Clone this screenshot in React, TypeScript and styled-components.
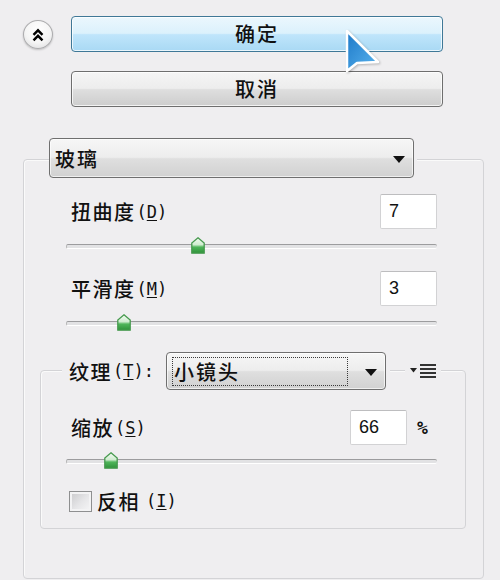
import React from "react";
import styled, { createGlobalStyle } from "styled-components";

const BG = "#efeef0";

const GlobalStyle = createGlobalStyle`
  html, body { margin: 0; padding: 0; background: ${BG}; }
  body { font-family: "Noto Sans CJK SC", "Noto Sans", sans-serif; color: #111; }
  * { box-sizing: border-box; }
`;

const Page = styled.div`
  position: relative;
  width: 500px;
  height: 580px;
  overflow: hidden;
  padding-top: 16px;
  background: ${BG};
`;

const TopBar = styled.div`
  display: grid;
  grid-template-columns: 71px 372px;
`;

const CollapseButton = styled.button`
  width: 30px;
  height: 29px;
  margin: 4px 0 0 23px;
  padding: 0;
  border-radius: 50%;
  border: 1px solid #acacae;
  background: radial-gradient(circle at 50% 35%, #ffffff 0%, #f5f5f5 55%, #d8d8da 100%);
  box-shadow: 0 1px 2px rgba(0, 0, 0, 0.2);
  display: flex;
  align-items: center;
  justify-content: center;
`;

const ButtonStack = styled.div`
  display: flex;
  flex-direction: column;
  gap: 19px;
`;

const PushButton = styled.button<{ $primary?: boolean }>`
  height: 36px;
  width: 100%;
  padding: 0;
  border-radius: 4px;
  border: 1px solid ${(p) => (p.$primary ? "#3f7897" : "#6e6e6e")};
  background: ${(p) =>
    p.$primary
      ? "linear-gradient(to bottom, #ebf7fd 0%, #dbf1fc 48%, #bfe5fb 52%, #a9d9f4 100%)"
      : "linear-gradient(to bottom, #f5f5f5 0%, #ededed 48%, #dedede 52%, #cdcdcd 100%)"};
  box-shadow: inset 0 0 0 1px rgba(255, 255, 255, 0.75);
  font-family: inherit;
  font-size: 20px;
  font-weight: 500;
  letter-spacing: 2px;
  line-height: 1;
  color: #111;
`;

const GroupBox = styled.div`
  border: 1px solid #d3d3d6;
  border-radius: 4px;
  box-shadow: inset 1px 1px 0 #fafafa;
`;

const OuterGroup = styled(GroupBox)`
  width: 461px;
  margin: 52px 0 0 23px;
  padding: 0 17px 49px 16px;
`;

const InnerGroup = styled(GroupBox)`
  margin-top: 40px;
  padding: 0 28px 16px 25px;
`;

const OuterHeader = styled.div`
  display: flex;
  margin: -22px 0 0 9px;
`;

const HeaderPad = styled.div`
  display: flex;
  background: ${BG};
  padding-right: 3px;
`;

const Select = styled.div<{ $width: number; $height: number }>`
  display: flex;
  align-items: center;
  width: ${(p) => p.$width}px;
  height: ${(p) => p.$height}px;
  padding: 0 8px 0 5px;
  border: 1px solid #6f6f6f;
  border-radius: 4px;
  background: linear-gradient(to bottom, #f6f6f6 0%, #ededed 48%, #dfdfdf 52%, #d1d1d1 100%);
  box-shadow: inset 0 0 0 1px rgba(255, 255, 255, 0.65);
  font-size: 20px;
  font-weight: 500;
  letter-spacing: 2px;
  white-space: nowrap;
`;

const FocusRect = styled.div`
  display: flex;
  align-items: center;
  width: 178px;
  height: 29px;
  margin-right: 17px;
  padding-left: 1px;
  border: 1px dotted #3a3a3a;
`;

const Arrow = styled.svg`
  flex: none;
  margin-left: auto;
  margin-top: 2px;
`;

const Params = styled.div`
  padding: 0 29px 0 26px;
`;

const ParamRow = styled.div<{ $top: number }>`
  display: flex;
  align-items: center;
  justify-content: space-between;
  height: 35px;
  margin-top: ${(p) => p.$top}px;
`;

const Label = styled.label`
  display: flex;
  align-items: center;
  margin-left: 5px;
  font-size: 20px;
  font-weight: 500;
  letter-spacing: 1.5px;
  white-space: nowrap;
`;

const Key = styled.span`
  margin-left: 1px;
  font-family: "DejaVu Sans Mono", monospace;
  font-size: 17px;
  font-weight: 400;
  letter-spacing: 0;
  u {
    text-decoration: underline;
    text-underline-offset: 2px;
  }
`;

const ValueGroup = styled.div`
  display: flex;
  align-items: center;
`;

const NumberInput = styled.input`
  width: 57px;
  height: 35px;
  padding: 0 0 0 8px;
  border: 1px solid #d2d2d4;
  border-top-color: #bdbdbf;
  border-radius: 2px;
  background: #fff;
  font-family: "Liberation Sans", Arial, sans-serif;
  font-size: 18px;
  color: #111;
  outline: none;
`;

const Unit = styled.span`
  width: 20px;
  margin-left: 10px;
  font-family: "DejaVu Sans Mono", monospace;
  font-size: 18px;
  font-weight: 700;
`;

const Slider = styled.div<{ $top: number }>`
  position: relative;
  height: 16px;
  margin-top: ${(p) => p.$top}px;
  &::before {
    content: "";
    position: absolute;
    left: 0;
    right: 0;
    top: 7px;
    height: 3px;
    border-top: 1px solid #9c9c9e;
    border-bottom: 1px solid #ffffff;
    border-left: 1px solid #b8b8b8;
    background: #e2e2e4;
    border-radius: 2px;
  }
`;

const Thumb = styled.svg`
  position: absolute;
  top: 0;
`;

const InnerHeader = styled.div`
  display: flex;
  align-items: center;
  justify-content: space-between;
  height: 38px;
  margin-top: -19px;
`;

const LegendLeft = styled.div`
  display: flex;
  align-items: center;
  height: 38px;
  margin-left: -4px;
  padding: 0 4px 0 7px;
  background: ${BG};
`;

const LegendLabel = styled(Label)`
  width: 97px;
  margin-left: 0;
`;

const MenuButton = styled.div`
  display: flex;
  padding: 0 5px;
  margin-right: -4px;
  background: ${BG};
`;

const CheckRow = styled.label`
  display: flex;
  align-items: center;
  gap: 5px;
  height: 22px;
  margin: 22px 0 0 3px;
  font-size: 20px;
  font-weight: 500;
  letter-spacing: 1.5px;
`;

const CheckBox = styled.span`
  width: 23px;
  height: 21px;
  border: 1px solid #8e8f90;
  background: linear-gradient(135deg, #c9c9cb 0%, #e6e6e8 55%, #f6f6f7 100%);
  box-shadow: inset 0 0 0 2px #f3f3f4;
`;

const Cursor = styled.svg`
  position: absolute;
  left: 344px;
  top: 28px;
  pointer-events: none;
  filter: drop-shadow(1px 1px 1px rgba(0, 0, 0, 0.25));
`;

const DropArrow = () => (
  <Arrow width="12" height="7" viewBox="0 0 12 7">
    <path d="M0 0 H12 L6 7 Z" fill="#111" />
  </Arrow>
);

const TRACK = 371;
const THUMB = 14;

const SliderThumb = ({ frac }: { frac: number }) => (
  <Thumb
    width={THUMB}
    height="17"
    viewBox="0 0 14 17"
    style={{ left: `${Math.round(frac * (TRACK - THUMB))}px` }}
  >
    <defs>
      <linearGradient id="tg" x1="0" y1="0" x2="0" y2="1">
        <stop offset="0" stopColor="#f4fbf4" />
        <stop offset="0.45" stopColor="#cfeccf" />
        <stop offset="0.6" stopColor="#4fb55a" />
        <stop offset="1" stopColor="#2e9239" />
      </linearGradient>
    </defs>
    <path d="M7 0.8 L13.2 6 L13.2 16.2 L0.8 16.2 L0.8 6 Z" fill="url(#tg)" stroke="#46994e" strokeWidth="1.3" />
  </Thumb>
);

const Param = ({
  label,
  keyChar,
  value,
  min,
  max,
  rowTop,
  unit,
}: {
  label: string;
  keyChar: string;
  value: number;
  min: number;
  max: number;
  rowTop: number;
  unit?: string;
}) => (
  <>
    <ParamRow $top={rowTop}>
      <Label>
        {label}
        <Key>
          (<u>{keyChar}</u>)
        </Key>
      </Label>
      <ValueGroup>
        <NumberInput defaultValue={String(value)} readOnly />
        {unit && <Unit>{unit}</Unit>}
      </ValueGroup>
    </ParamRow>
    <Slider $top={unit ? 7 : 8}>
      <SliderThumb frac={(value - min) / (max - min)} />
    </Slider>
  </>
);

export default function App() {
  return (
    <Page>
      <GlobalStyle />
      <TopBar>
        <div>
          <CollapseButton aria-label="collapse">
            <svg width="12" height="14" viewBox="0 0 12 14">
              <path
                d="M1.5 6.8 L6 2.3 L10.5 6.8 M1.5 12.3 L6 7.8 L10.5 12.3"
                stroke="#000"
                strokeWidth="2.4"
                fill="none"
              />
            </svg>
          </CollapseButton>
        </div>
        <ButtonStack>
          <PushButton $primary>确定</PushButton>
          <PushButton>取消</PushButton>
        </ButtonStack>
      </TopBar>

      <OuterGroup>
        <OuterHeader>
          <HeaderPad>
            <Select $width={365} $height={40}>
              玻璃
              <DropArrow />
            </Select>
          </HeaderPad>
        </OuterHeader>

        <Params>
          <Param label="扭曲度" keyChar="D" value={7} min={0} max={20} rowTop={16} />
          <Param label="平滑度" keyChar="M" value={3} min={1} max={15} rowTop={18} />
        </Params>

        <InnerGroup>
          <InnerHeader>
            <LegendLeft>
              <LegendLabel>
                纹理
                <Key>
                  (<u>T</u>):
                </Key>
              </LegendLabel>
              <Select $width={220} $height={38}>
                <FocusRect>小镜头</FocusRect>
                <DropArrow />
              </Select>
            </LegendLeft>
            <MenuButton>
              <svg width="26" height="16" viewBox="0 0 26 16">
                <path d="M0 5 H7 L3.5 9.5 Z" fill="#222" />
                <rect x="10" y="1" width="16" height="2" fill="#333" />
                <rect x="10" y="5" width="16" height="2" fill="#333" />
                <rect x="10" y="9" width="16" height="2" fill="#333" />
                <rect x="10" y="13" width="16" height="2" fill="#333" />
              </svg>
            </MenuButton>
          </InnerHeader>

          <Param label="缩放" keyChar="S" value={66} min={50} max={200} rowTop={20} unit="%" />

          <CheckRow>
            <CheckBox />
            反相
            <Key>
              (<u>I</u>)
            </Key>
          </CheckRow>
        </InnerGroup>
      </OuterGroup>

      <Cursor width="40" height="50" viewBox="0 0 40 50">
        <defs>
          <linearGradient id="cg" x1="0" y1="0" x2="1" y2="1">
            <stop offset="0" stopColor="#1c78c8" />
            <stop offset="1" stopColor="#5ab4ee" />
          </linearGradient>
        </defs>
        <path d="M3 3 L3 43 L13 35 L34 34 Z" fill="url(#cg)" stroke="#fff" strokeWidth="2.5" strokeLinejoin="round" />
      </Cursor>
    </Page>
  );
}
